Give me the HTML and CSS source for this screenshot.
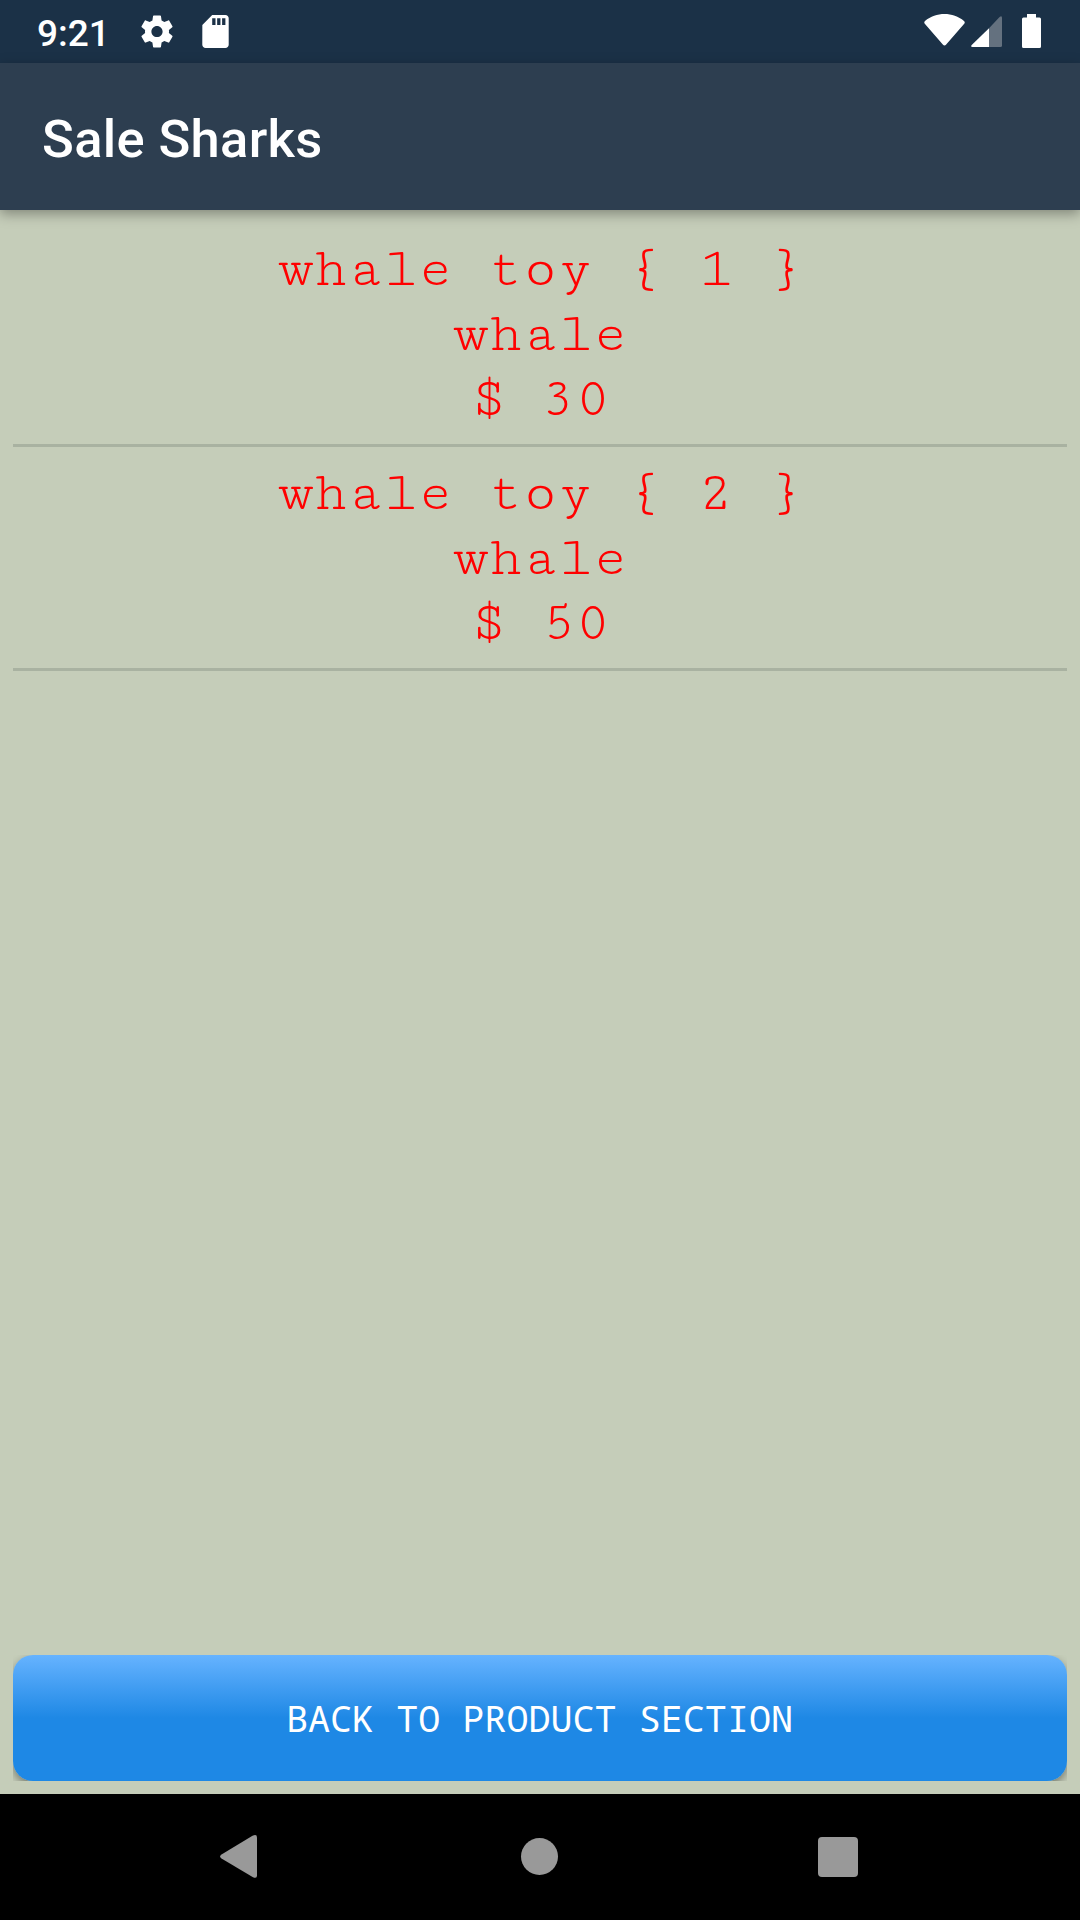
FILE: index.html
```html
<!DOCTYPE html>
<html lang="en">
<head>
<meta charset="utf-8">
<title>Sale Sharks</title>
<link rel="stylesheet" href="styles.css">
</head>
<body>
<div class="screen">
  <header class="status-bar">
    <span class="clock">9:21</span>
    <svg class="gear" viewBox="2 2 20 20" aria-hidden="true"><path d="M19.43 12.98c.04-.32.07-.64.07-.98s-.03-.66-.07-.98l2.11-1.65c.19-.15.24-.42.12-.64l-2-3.46c-.12-.22-.39-.3-.61-.22l-2.49 1c-.52-.4-1.08-.73-1.69-.98l-.38-2.65C14.46 2.18 14.25 2 14 2h-4c-.25 0-.46.18-.49.42l-.38 2.65c-.61.25-1.17.59-1.69.98l-2.49-1c-.23-.09-.49 0-.61.22l-2 3.46c-.13.22-.07.49.12.64l2.11 1.65c-.04.32-.07.65-.07.98s.03.66.07.98l-2.11 1.65c-.19.15-.24.42-.12.64l2 3.46c.12.22.39.3.61.22l2.49-1c.52.4 1.08.73 1.69.98l.38 2.65c.03.24.24.42.49.42h4c.25 0 .46-.18.49-.42l.38-2.65c.61-.25 1.17-.59 1.69-.98l2.49 1c.23.09.49 0 .61-.22l2-3.46c.12-.22.07-.49-.12-.64l-2.11-1.65zM12 15.5c-1.93 0-3.5-1.57-3.5-3.5s1.57-3.5 3.5-3.5 3.5 1.57 3.5 3.5-1.57 3.5-3.5 3.5z"/></svg>
    <svg class="card" viewBox="4 2 16 20" aria-hidden="true"><path d="M18 2h-8L4.02 8 4 20c0 1.100.9 2 2 2h12c1.100 0 2-.9 2-2V4c0-1.100-.9-2-2-2zm-6 6h-2V4h2v4zm3 0h-2V4h2v4zm3 0h-2V4h2v4z"/></svg>
    <svg class="wifi" viewBox="0 0 41 32" aria-hidden="true"><path d="M1 7Q-.5 8.500 1 10L18.800 30.500Q20.500 32.500 22.200 30.500L40 10Q41.500 8.500 40 7C29-2.300 12-2.300 1 7Z"/></svg>
    <svg class="signal" viewBox="0 0 31 31" aria-hidden="true"><path class="faint" d="M18 12.200 28.600 1Q31-1 31 2V29.500Q31 31 29.500 31H18Z"/><path d="M18 12.200V31H1.500Q-.8 31 .7 29Z"/></svg>
    <svg class="battery" viewBox="0 0 19 34" aria-hidden="true"><path d="M5 0H14V3.500H17.500Q19 3.500 19 5V32.500Q19 34 17.500 34H1.500Q0 34 0 32.500V5Q0 3.500 1.500 3.500H5Z"/></svg>
  </header>
  <div class="app-bar"><h1 class="title">Sale Sharks</h1></div>
  <main class="content">
    <ul class="products">
      <li class="product"><p>whale toy { 1 }</p><p>whale</p><p>$ 30</p></li>
      <li class="product"><p>whale toy { 2 }</p><p>whale</p><p>$ 50</p></li>
    </ul>
    <div class="button-area"><div class="button-clip"><button class="back">BACK TO PRODUCT SECTION</button></div></div>
  </main>
  <nav class="nav-bar">
    <svg class="nav-back" viewBox="0 0 37 43" aria-hidden="true"><path d="M1.500 19.500 32.500.8Q37-1.200 37 2.500V40.500Q37 44 33 42.200L1.500 23.500Q-1.300 21.500 1.500 19.500Z"/></svg>
    <span class="nav-home"></span>
    <span class="nav-recent"></span>
  </nav>
</div>
</body>
</html>
```
FILE: styles.css
```css
* { box-sizing: border-box; }
body, h1, ul, p { margin: 0; padding: 0; }
svg { display: block; fill: #fff; flex: none; }

.screen {
  display: flex;
  flex-direction: column;
  width: 1080px;
  height: 1920px;
  overflow: hidden;
  background: #c5cdb9;
  font-family: Roboto, sans-serif;
}

.status-bar {
  display: flex;
  align-items: flex-start;
  height: 63px;
  padding: 0 39px 0 37px;
  background: #1b3147;
  color: #fff;
}
.clock { width: 104px; padding-top: 2px; font-size: 37px; font-weight: 500; line-height: 63px; }
.gear { width: 32px; height: 33px; margin-top: 15px; }
.card { width: 27px; height: 33px; margin: 15px 0 0 28.500px; }
.wifi { width: 41px; height: 32px; margin: 14px 0 0 auto; }
.signal { width: 31px; height: 31px; margin: 16px 0 0 6px; }
.faint { fill: #64717f; }
.battery { width: 19px; height: 34px; margin: 14px 0 0 20px; }

.app-bar {
  position: relative;
  display: flex;
  align-items: center;
  height: 147px;
  padding: 4px 42px 0;
  background: #2d3e50;
  color: #fff;
  box-shadow: 0 4px 12px rgba(0, 0, 0, .34);
}
.title { font-size: 52.500px; font-weight: 500; line-height: 62px; letter-spacing: .35px; }

.content { display: flex; flex: 1; flex-direction: column; justify-content: space-between; }
.products { padding: 13px 13px 0; list-style: none; }
.product {
  height: 224px;
  padding-top: 14px;
  border-bottom: 3px solid #a9b2a1;
  color: #f00;
  font: 57.750px/65px "Cutive Mono", "Liberation Mono", monospace;
  letter-spacing: .05px;
  text-align: center;
}
.product p { padding-left: 1px; }

.button-area { padding: 0 13px 13px; }
.button-clip { overflow: hidden; }
.back {
  display: block;
  width: 100%;
  height: 126px;
  padding: 0 1px 1px 0;
  border: 0;
  border-radius: 20px;
  background: linear-gradient(#66b3ff, #1e88e5 50%);
  box-shadow: 0 4px 8px rgba(0, 0, 0, .4);
  color: #fff;
  font: 36.750px "Droid Sans Mono", "Noto Sans Mono", "DejaVu Sans Mono", monospace;
}

.nav-bar {
  display: flex;
  align-items: center;
  height: 126px;
  padding: 0 222px 1px 220px;
  background: #000;
}
.nav-back { width: 37px; height: 43px; fill: #999; }
.nav-home { width: 37px; height: 37px; margin-left: 264px; border-radius: 50%; background: #999; }
.nav-recent { width: 40px; height: 40px; margin-left: auto; border-radius: 4px; background: #999; }
```
